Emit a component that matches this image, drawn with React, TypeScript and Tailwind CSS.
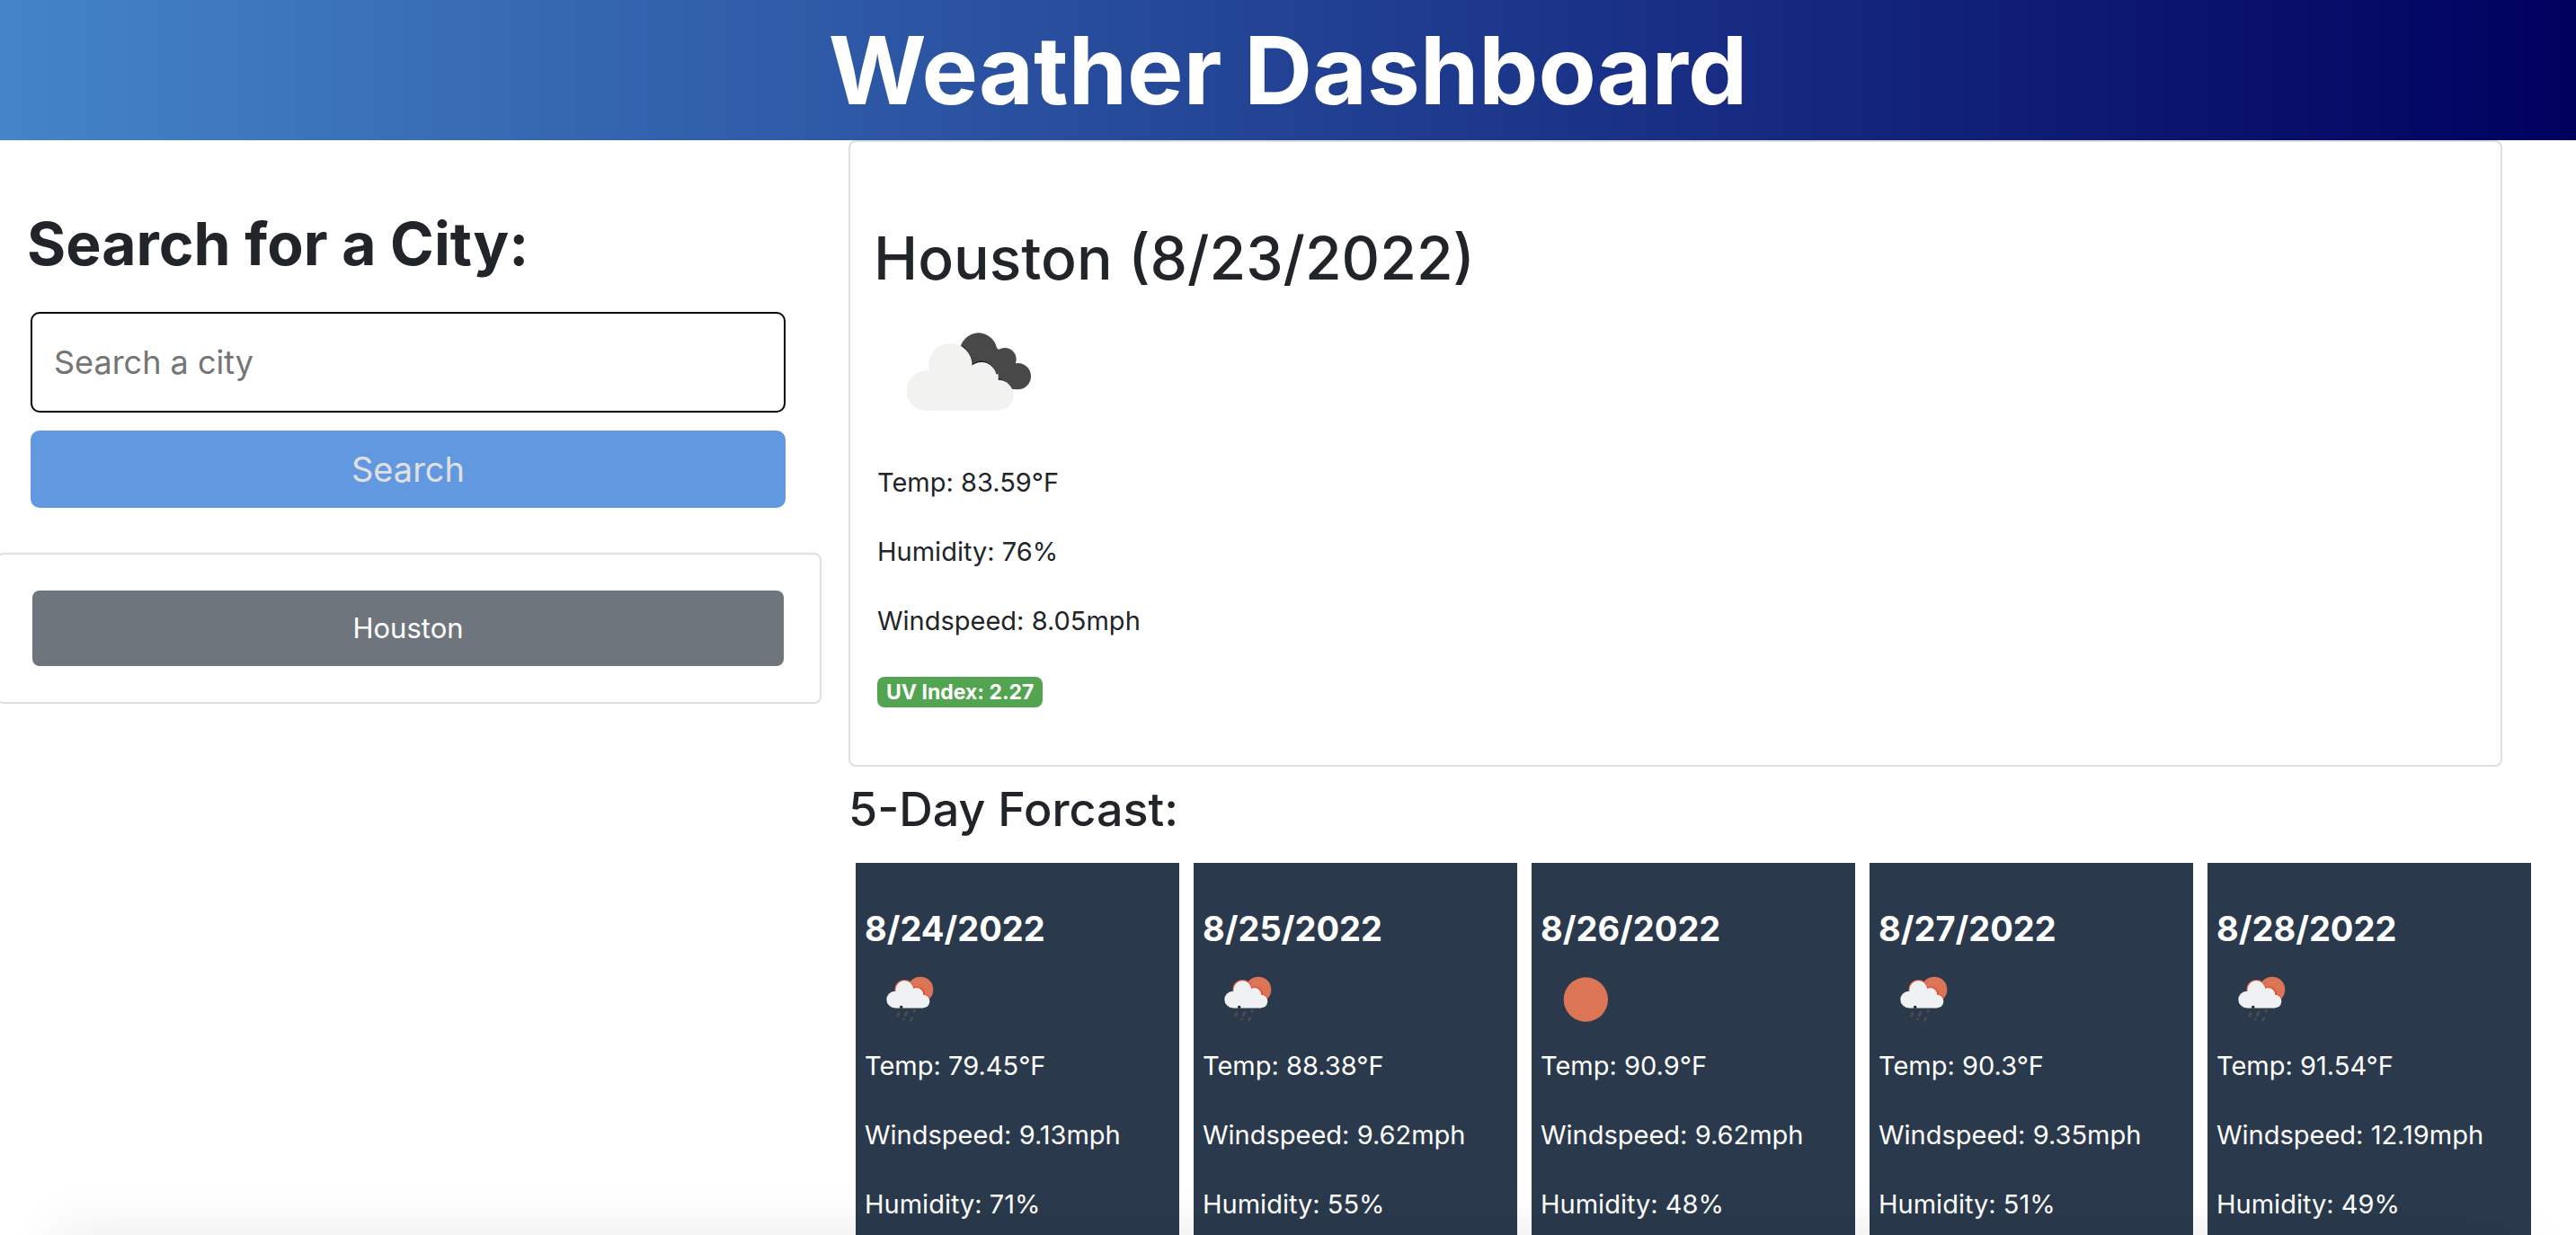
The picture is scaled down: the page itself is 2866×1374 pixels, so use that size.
import React from "react";

type Sky = "rain" | "clear";

interface Day {
  date: string;
  sky: Sky;
  temp: string;
  wind: string;
  humidity: string;
}

const days: Day[] = [
  { date: "8/24/2022", sky: "rain", temp: "79.45", wind: "9.13", humidity: "71" },
  { date: "8/25/2022", sky: "rain", temp: "88.38", wind: "9.62", humidity: "55" },
  { date: "8/26/2022", sky: "clear", temp: "90.9", wind: "9.62", humidity: "48" },
  { date: "8/27/2022", sky: "rain", temp: "90.3", wind: "9.35", humidity: "51" },
  { date: "8/28/2022", sky: "rain", temp: "91.54", wind: "12.19", humidity: "49" },
];

function BrokenClouds() {
  return (
    <svg viewBox="220 85 435 270" className="h-[90px] w-[145px]" role="img" aria-label="Broken clouds">
      <g fill="#484849">
        <circle cx="474" cy="154" r="62" />
        <circle cx="562" cy="180" r="38" />
        <circle cx="605" cy="237" r="44" />
        <path d="M416 135 500 110 560 165 610 210 600 281 585 279 480 240Z" />
      </g>
      <g fill="#1f1f20">
        <path d="M416 132 Q444 148 458 197 L450 205 Z" />
        <path d="M456 196 Q470 184 487 186 Q528 190 536 243 L520 250 480 220Z" />
        <path d="M530 244 Q566 244 588 279 L570 290Z" />
      </g>
      <g fill="#f2f2f0">
        <circle cx="380" cy="200" r="73" />
        <circle cx="301" cy="285" r="67" />
        <circle cx="484" cy="240" r="50" />
        <circle cx="540" cy="300" r="51" />
        <path d="M301 230H540V351H301Z" />
      </g>
    </svg>
  );
}

function RainWithSun() {
  return (
    <svg viewBox="170 400 180 171" className="h-[57px] w-[60px]" role="img" aria-label="Rain">
      <circle cx="293" cy="454" r="43" fill="#db7556" />
      <g fill="#e2543a">
        <circle cx="240" cy="454" r="33" />
        <circle cx="283" cy="470" r="26" />
        <path d="M298 468Q318 468 326 484L310 490Z" />
      </g>
      <path d="M208 512H302V517H208Z" fill="#6b747d" />
      <g fill="#f0f1f2">
        <circle cx="240" cy="454" r="30" />
        <circle cx="208" cy="487" r="28" />
        <circle cx="280" cy="470" r="22" />
        <circle cx="302" cy="493" r="22" />
        <path d="M208 465H302V515H208Z" />
      </g>
      <circle cx="229" cy="512" r="5" fill="#222" />
      <g stroke="#4b4b4c" strokeWidth="9" strokeLinecap="round">
        <path d="M221 534 218 541M247 531 243 539M273 525 272 527M238 552 238 553M265 550 261 556" />
      </g>
    </svg>
  );
}

function ClearSky() {
  return (
    <svg viewBox="170 400 180 171" className="h-[57px] w-[60px]" role="img" aria-label="Clear sky">
      <circle cx="258" cy="487" r="74" fill="#db7556" />
    </svg>
  );
}

function DayCard({ day }: { day: Day }) {
  return (
    <article className="h-[480px] bg-[#2a3a4c] pt-[49px] pl-2.5 text-white">
      <h4 className="text-[38px] leading-[48px] font-bold">{day.date}</h4>
      <div className="mt-[26px] pl-[21px]">{day.sky === "rain" ? <RainWithSun /> : <ClearSky />}</div>
      <div className="mt-[23px] flex flex-col gap-8 text-[29px] leading-[45px]">
        <p>Temp: {day.temp}°F</p>
        <p>Windspeed: {day.wind}mph</p>
        <p>Humidity: {day.humidity}%</p>
      </div>
    </article>
  );
}

export default function App() {
  return (
    <div className="relative h-screen overflow-hidden bg-white font-[Inter,sans-serif] text-[#212529]">
      <header className="bg-[linear-gradient(90deg,#4484c8,#00005f)] py-3 text-center text-white">
        <h1 className="text-[105px] leading-[132px] font-bold">Weather Dashboard</h1>
      </header>

      <div className="grid grid-cols-[472fr_961fr]">
        <aside className="pr-[30px]">
          <form className="pt-[72px] pr-10 pl-[34px]" onSubmit={(e) => e.preventDefault()}>
            <h2 className="-ml-1 text-[66px] leading-[86px] font-bold">
              <label htmlFor="city">Search for a City:</label>
            </h2>
            <input
              id="city"
              type="text"
              placeholder="Search a city"
              className="mt-[33px] block h-28 w-full rounded-[10px] border-2 border-black px-6 text-[36px] placeholder:text-[#757575]"
            />
            <button
              type="submit"
              className="mt-5 block h-[86px] w-full rounded-[10px] bg-[#6198e0] text-[38px] text-[#e0e0e0]"
            >
              Search
            </button>
          </form>
          <div className="mt-[50px] -ml-1 rounded-lg border-2 border-[#dfdfdf] py-10 pr-10 pl-[38px]">
            <button type="button" className="block h-[84px] w-full rounded-lg bg-[#6e757c] text-[31px] text-white">
              Houston
            </button>
          </div>
        </aside>

        <main>
          <section className="mr-[82px] rounded-lg border-2 border-[#dfdfdf] pt-[86px] pb-16 pl-[30px]">
            <h2 className="-ml-1 text-[66px] leading-[86px] font-medium">Houston (8/23/2022)</h2>
            <div className="mt-[38px] pl-7">
              <BrokenClouds />
            </div>
            <div className="mt-14 flex flex-col gap-8 text-[29px] leading-[45px]">
              <p>Temp: 83.59°F</p>
              <p>Humidity: 76%</p>
              <p>Windspeed: 8.05mph</p>
            </div>
            <p className="mt-10 w-fit rounded-lg bg-[#53a451] px-2.5 text-[23px] leading-[34px] font-bold text-white">
              UV Index: 2.27
            </p>
          </section>

          <h3 className="mt-[14px] text-[52px] leading-[68px] font-medium">5-Day Forcast:</h3>
          <div className="mt-[25px] mr-[50px] ml-2 grid grid-cols-5 gap-4">
            {days.map((day) => (
              <DayCard key={day.date} day={day} />
            ))}
          </div>
        </main>
      </div>

      <div className="pointer-events-none absolute inset-x-[60px] top-full h-10 shadow-[0_0_60px_rgba(0,0,0,0.1)]" />
    </div>
  );
}
